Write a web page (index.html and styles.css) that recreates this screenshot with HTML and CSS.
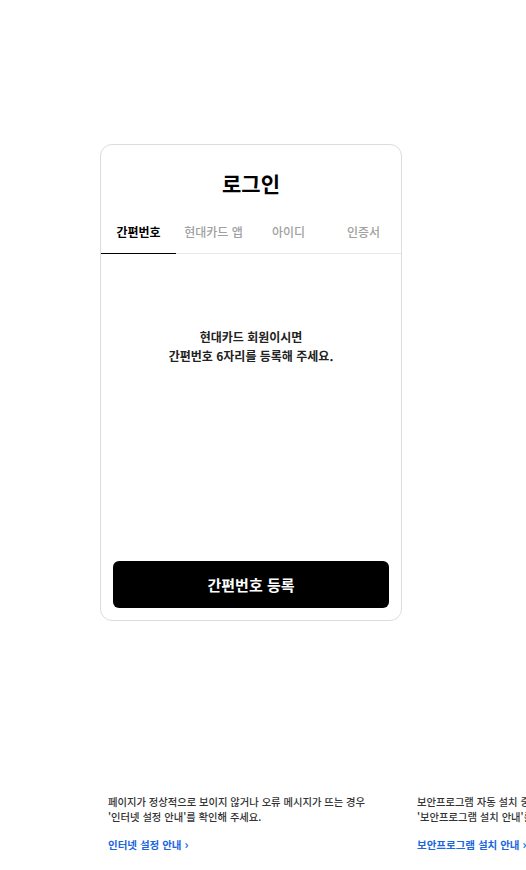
FILE: index.html
```html
<!DOCTYPE html>
<html lang="ko">
<head>
<meta charset="utf-8">
<link rel="stylesheet" href="styles.css">
</head>
<body>
<div class="page">
  <div class="card">
    <h1 class="title">로그인</h1>
    <div class="tabs">
      <div class="tab active">간편번호</div>
      <div class="tab">현대카드 앱</div>
      <div class="tab">아이디</div>
      <div class="tab">인증서</div>
    </div>
    <div class="content">
      <p class="msg">현대카드 회원이시면<br>간편번호 6자리를 등록해 주세요.</p>
    </div>
    <button class="btn">간편번호 등록</button>
  </div>
  <div class="notice">
    <div class="col">
      <p class="desc">페이지가 정상적으로 보이지 않거나 오류 메시지가 뜨는 경우<br>'인터넷 설정 안내'를 확인해 주세요.</p>
      <a class="link">인터넷 설정 안내 <span class="chev">›</span></a>
    </div>
    <div class="col">
      <p class="desc">보안프로그램 자동 설치 중 문제가 발생하는 경우<br>'보안프로그램 설치 안내'를 확인해 주세요.</p>
      <a class="link">보안프로그램 설치 안내 <span class="chev">›</span></a>
    </div>
  </div>
</div>
</body>
</html>
```

FILE: styles.css
```css
html, body {
  margin: 0;
  padding: 0;
  background: #fff;
  overflow: hidden;
}
body {
  font-family: "Noto Sans CJK KR", "Noto Sans", sans-serif;
  color: #111;
  width: 526px;
  height: 870px;
}
.page {
  padding-top: 144px;
}
.card {
  margin-left: 100px;
  width: 300px;
  height: 475px;
  border: 1px solid #dcdcdc;
  border-radius: 12px;
  display: flex;
  flex-direction: column;
  box-sizing: content-box;
}
.title {
  margin: 24px 0 0;
  font-size: 21px;
  line-height: 28px;
  font-weight: 700;
  text-align: center;
  color: #000;
}
.tabs {
  margin-top: 26px;
  display: grid;
  grid-template-columns: repeat(4, 1fr);
  border-bottom: 1px solid #e8e8e8;
}
.tab {
  font-size: 12px;
  line-height: 18px;
  padding-bottom: 12px;
  text-align: center;
  color: #a0a0a0;
  font-weight: 500;
  margin-bottom: -1px;
  border-bottom: 1px solid transparent;
}
.tab.active {
  color: #000;
  font-weight: 700;
  border-bottom-color: #000;
}
.content {
  flex: 1;
}
.msg {
  margin: 73px 0 0;
  font-size: 12px;
  line-height: 19px;
  text-align: center;
  font-weight: 700;
  color: #222;
}
.btn {
  margin: 0 12px 12px;
  height: 47px;
  border: 0;
  border-radius: 6px;
  background: #000;
  color: #fff;
  font-family: inherit;
  font-size: 15px;
  font-weight: 700;
}
.notice {
  margin-top: 173px;
  padding-left: 108px;
  display: flex;
  gap: 9px;
}
.col {
  flex: 0 0 300px;
}
.desc {
  margin: 0;
  font-size: 10.3px;
  line-height: 15px;
  font-weight: 500;
  color: #333;
  white-space: nowrap;
}
.link {
  display: block;
  margin-top: 12px;
  font-size: 10.5px;
  line-height: 15px;
  font-weight: 700;
  color: #1a66e0;
  white-space: nowrap;
}
.chev {
  font-size: 12px;
  font-weight: 700;
}
```
